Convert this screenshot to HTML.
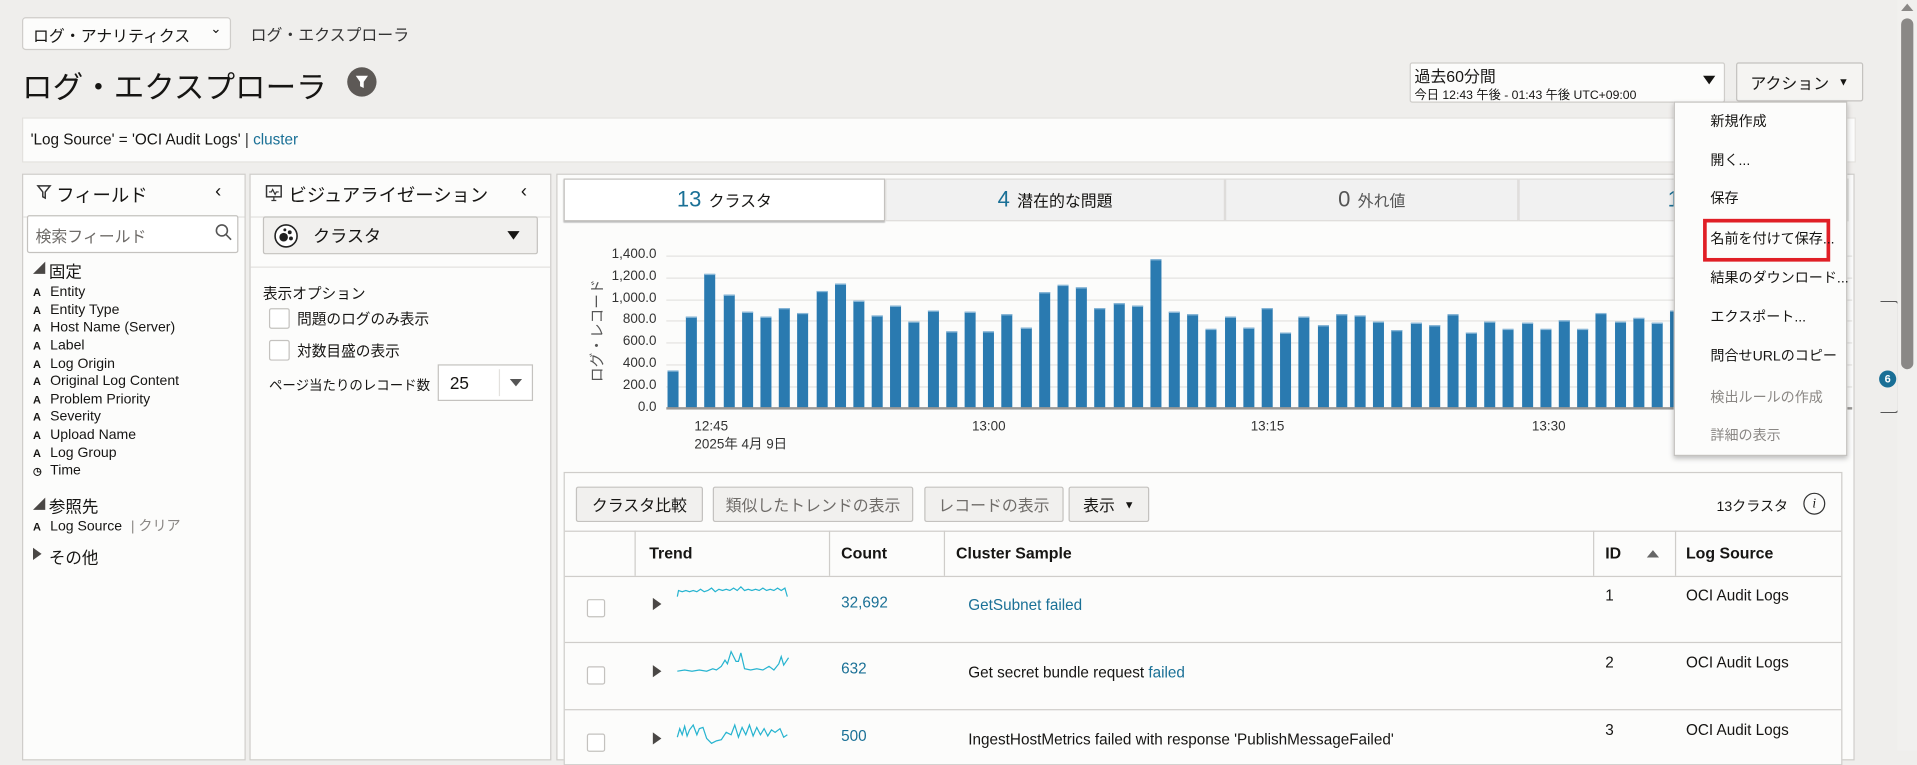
<!DOCTYPE html>
<html><head><meta charset="utf-8">
<style>
html,body{margin:0;padding:0;width:1917px;height:751px;overflow:hidden;background:#efeeec;}
#w{position:absolute;left:0;top:0;width:1568px;height:614px;transform:scale(1.22258);transform-origin:0 0;font-family:"Liberation Sans","Noto Sans CJK JP",sans-serif;color:#161513;font-size:12px;}
.a{position:absolute;}
.box{position:absolute;background:#fcfcfb;border:1px solid #cfcdca;box-sizing:border-box;}
.btn{position:absolute;background:#f1f0ee;border:1px solid #c4c2bf;border-radius:2px;box-sizing:border-box;font-size:13px;display:flex;align-items:center;justify-content:center;}
.f{position:absolute;left:27px;font-size:11.5px;}
.f b{display:inline-block;width:14px;font-size:9px;}
.bars{position:absolute;left:546px;top:180px;height:154px;display:flex;align-items:flex-end;}
.bars i{display:block;width:9px;margin-right:6.2px;background:#2a7ab0;border-top:1px solid #8ab8d8;box-sizing:border-box;}
.gl{position:absolute;left:545px;width:970px;height:1px;background:#e4e3e1;}
.yl{position:absolute;left:480px;width:57px;text-align:right;font-size:11px;color:#333;}
.xl{position:absolute;font-size:11px;color:#333;}
.tab{position:absolute;top:146px;height:35px;box-sizing:border-box;background:#f1f1f1;border:1px solid #dedcda;display:flex;align-items:center;justify-content:center;font-size:13px;}
.tab span{font-size:18px;color:#1a7096;margin-right:6px;}
.th{position:absolute;top:445px;font-weight:bold;font-size:13px;}
.vl{position:absolute;width:1px;background:#cfcdca;}
.hl{position:absolute;height:1px;background:#cfcdca;}
.cb{position:absolute;width:13px;height:13px;border:1px solid #c4c2bf;border-radius:2px;background:#fff;}
.tri{position:absolute;width:0;height:0;border-top:5px solid transparent;border-bottom:5px solid transparent;border-left:7px solid #4a4745;}
.mi{position:absolute;left:1399px;font-size:11.5px;}
</style></head><body><div id="w">

<div class="box" style="left:18px;top:14px;width:171px;height:27px;border-radius:3px;"></div>
<div class="a" style="left:27px;top:19px;font-size:13px;">ログ・アナリティクス</div>
<div class="a" style="left:172px;top:17px;font-size:11px;">&#8964;</div>
<div class="a" style="left:205px;top:18px;font-size:13px;color:#333;">ログ・エクスプローラ</div>
<div class="a" style="left:18px;top:52px;font-size:25px;">ログ・エクスプローラ</div>
<div class="a" style="left:284px;top:55px;width:24px;height:24px;border-radius:12px;background:#5d5956;"></div>
<svg class="a" style="left:284px;top:55px" width="24" height="24"><path d="M7 7h10l-3.5 5v5l-3-1.5v-3.5z" fill="#fff"/></svg>

<div class="box" style="left:1153px;top:51px;width:258px;height:33px;border-radius:2px;"></div>
<div class="a" style="left:1157px;top:52px;font-size:13px;">過去60分間</div>
<div class="a" style="left:1157px;top:69px;font-size:10px;">今日 12:43 午後 - 01:43 午後 UTC+09:00</div>
<div class="a" style="left:1393px;top:62px;border-left:5px solid transparent;border-right:5px solid transparent;border-top:7px solid #161513;"></div>
<div class="btn" style="left:1420px;top:51px;width:104px;height:32px;background:#f5f4f2;">アクション&nbsp;&nbsp;<span style="font-size:9px">▼</span></div>

<div class="box" style="left:18px;top:96px;width:1500px;height:37px;border-color:#e3e1de;"></div>
<div class="a" style="left:25px;top:107px;font-size:12.5px;">'Log Source' = 'OCI Audit Logs' <span style="color:#333">|</span> <span style="color:#1a7096">cluster</span></div>

<div class="box" style="left:18px;top:142px;width:183px;height:480px;"></div>
<div class="hl" style="left:19px;top:177px;width:181px;background:#e3e1de"></div>
<svg class="a" style="left:29px;top:150px" width="14" height="14"><path d="M2 2h10l-4 5v5l-2-1v-4z" fill="none" stroke="#333" stroke-width="1.2"/></svg>
<div class="a" style="left:46px;top:149px;font-size:15px;">フィールド</div>
<div class="a" style="left:176px;top:148px;font-size:15px;">&#8249;</div>
<div class="box" style="left:22px;top:176px;width:173px;height:31px;border-color:#c4c2bf;border-radius:2px;background:#fff;"></div>
<div class="a" style="left:29px;top:183px;font-size:13px;color:#6f6c69;">検索フィールド</div>
<svg class="a" style="left:175px;top:182px" width="16" height="16"><circle cx="6.5" cy="6.5" r="4.5" fill="none" stroke="#555" stroke-width="1.3"/><path d="M10 10l4 4" stroke="#555" stroke-width="1.3"/></svg>
<div class="a" style="left:27px;top:214px;border-left:10px solid transparent;border-bottom:10px solid #4a4745;width:0;height:0;"></div>
<div class="a" style="left:40px;top:211px;font-size:13.5px;">固定</div>
<div class="f" style="top:233px"><b>A</b>Entity</div>
<div class="f" style="top:248px"><b>A</b>Entity Type</div>
<div class="f" style="top:262px"><b>A</b>Host Name (Server)</div>
<div class="f" style="top:277px"><b>A</b>Label</div>
<div class="f" style="top:292px"><b>A</b>Log Origin</div>
<div class="f" style="top:306px"><b>A</b>Original Log Content</div>
<div class="f" style="top:321px"><b>A</b>Problem Priority</div>
<div class="f" style="top:335px"><b>A</b>Severity</div>
<div class="f" style="top:350px"><b>A</b>Upload Name</div>
<div class="f" style="top:365px"><b>A</b>Log Group</div>
<div class="f" style="top:379px"><b style="font-size:8px">◷</b>Time</div>
<div class="a" style="left:27px;top:407px;border-left:10px solid transparent;border-bottom:10px solid #4a4745;width:0;height:0;"></div>
<div class="a" style="left:40px;top:403px;font-size:13.5px;">参照先</div>
<div class="f" style="top:422px"><b>A</b>Log Source <span style="color:#8a8784;margin-left:4px">| クリア</span></div>
<div class="tri" style="left:27px;top:448px;"></div>
<div class="a" style="left:40px;top:445px;font-size:13.5px;">その他</div>

<div class="box" style="left:204px;top:142px;width:247px;height:480px;"></div>
<div class="hl" style="left:205px;top:177px;width:245px;background:#e3e1de"></div>
<svg class="a" style="left:217px;top:151px" width="14" height="14"><rect x="1" y="1" width="12" height="9" fill="none" stroke="#333" stroke-width="1.2"/><path d="M3 6l2 0 1-2 2 4 1-2h2M5 13h4M7 10v3" fill="none" stroke="#333" stroke-width="1"/></svg>
<div class="a" style="left:236px;top:149px;font-size:15px;">ビジュアライゼーション</div>
<div class="a" style="left:426px;top:148px;font-size:15px;">&#8249;</div>
<div class="btn" style="left:215px;top:177px;width:225px;height:31px;justify-content:flex-start;padding-left:8px;">
<svg width="20" height="20"><circle cx="10" cy="10" r="9" fill="#fff" stroke="#222" stroke-width="1.3"/><circle cx="8" cy="11" r="3.5" fill="#222"/><circle cx="13" cy="7" r="1.6" fill="#222"/><circle cx="14" cy="12" r="1.6" fill="#222"/><circle cx="9" cy="5" r="1.2" fill="#222"/></svg>
<span style="margin-left:12px;font-size:14px">クラスタ</span></div>
<div class="a" style="left:415px;top:189px;border-left:5px solid transparent;border-right:5px solid transparent;border-top:7px solid #161513;"></div>
<div class="hl" style="left:205px;top:218px;width:245px;background:#e3e1de"></div>
<div class="a" style="left:215px;top:231px;font-size:12px;">表示オプション</div>
<div class="cb" style="left:220px;top:252px;width:15px;height:15px"></div>
<div class="a" style="left:243px;top:252px;font-size:12px;">問題のログのみ表示</div>
<div class="cb" style="left:220px;top:278px;width:15px;height:15px"></div>
<div class="a" style="left:243px;top:278px;font-size:12px;">対数目盛の表示</div>
<div class="a" style="left:220px;top:307px;font-size:11px;">ページ当たりのレコード数</div>
<div class="box" style="left:358px;top:298px;width:78px;height:30px;border-color:#c4c2bf;background:#fff;"></div>
<div class="a" style="left:368px;top:305px;font-size:14px;">25</div>
<div class="vl" style="left:408px;top:302px;height:22px;background:#e3e1de"></div>
<div class="a" style="left:417px;top:310px;border-left:5px solid transparent;border-right:5px solid transparent;border-top:6px solid #555;"></div>

<div class="box" style="left:455px;top:142px;width:1062px;height:480px;"></div>
<div class="tab" style="left:461px;width:263px;background:#fff;border-color:#c4c2bf;box-shadow:0 1px 1px #aaa;"><span>13</span>クラスタ</div>
<div class="tab" style="left:724px;width:278px;"><span>4</span>潜在的な問題</div>
<div class="tab" style="left:1002px;width:240px;color:#555;"><span style="color:#555">0</span>外れ値</div>
<div class="tab" style="left:1242px;width:270px;"><span>13</span></div>

<div class="gl" style="top:209px"></div><div class="gl" style="top:227px"></div><div class="gl" style="top:245px"></div><div class="gl" style="top:262px"></div><div class="gl" style="top:280px"></div><div class="gl" style="top:298px"></div><div class="gl" style="top:316px"></div>
<div class="yl" style="top:202px">1,400.0</div><div class="yl" style="top:220px">1,200.0</div><div class="yl" style="top:238px">1,000.0</div><div class="yl" style="top:255px">800.0</div><div class="yl" style="top:273px">600.0</div><div class="yl" style="top:291px">400.0</div><div class="yl" style="top:309px">200.0</div><div class="yl" style="top:327px">0.0</div>
<div class="a" style="left:443px;top:262px;width:90px;text-align:center;font-size:12px;color:#555;transform:rotate(-90deg);">ログ・レコード</div>
<div class="bars">
<i style="height:31px"></i><i style="height:75px"></i><i style="height:110px"></i><i style="height:93px"></i><i style="height:79px"></i><i style="height:75px"></i><i style="height:82px"></i><i style="height:78px"></i><i style="height:96px"></i><i style="height:102px"></i><i style="height:88px"></i><i style="height:76px"></i><i style="height:84px"></i><i style="height:71px"></i><i style="height:80px"></i><i style="height:63px"></i><i style="height:79px"></i><i style="height:63px"></i><i style="height:77px"></i><i style="height:66px"></i><i style="height:95px"></i><i style="height:101px"></i><i style="height:99px"></i><i style="height:82px"></i><i style="height:86px"></i><i style="height:84px"></i><i style="height:122px"></i><i style="height:79px"></i><i style="height:77px"></i><i style="height:65px"></i><i style="height:75px"></i><i style="height:66px"></i><i style="height:82px"></i><i style="height:62px"></i><i style="height:75px"></i><i style="height:68px"></i><i style="height:77px"></i><i style="height:76px"></i><i style="height:71px"></i><i style="height:64px"></i><i style="height:70px"></i><i style="height:68px"></i><i style="height:77px"></i><i style="height:62px"></i><i style="height:71px"></i><i style="height:65px"></i><i style="height:70px"></i><i style="height:65px"></i><i style="height:72px"></i><i style="height:65px"></i><i style="height:78px"></i><i style="height:71px"></i><i style="height:74px"></i><i style="height:70px"></i><i style="height:80px"></i><i style="height:76px"></i><i style="height:73px"></i><i style="height:79px"></i><i style="height:71px"></i><i style="height:77px"></i><i style="height:72px"></i><i style="height:75px"></i><i style="height:71px"></i>
</div>
<div class="a" style="left:545px;top:333px;width:970px;height:2px;background:#9a9896;"></div>
<div class="xl" style="left:568px;top:343px;">12:45<br>2025年 4月 9日</div>
<div class="xl" style="left:795px;top:343px;">13:00</div>
<div class="xl" style="left:1023px;top:343px;">13:15</div>
<div class="xl" style="left:1253px;top:343px;">13:30</div>

<div class="box" style="left:461px;top:386px;width:1046px;height:240px;border-color:#cfcdca;"></div>
<div class="btn" style="left:471px;top:398px;width:104px;height:29px;">クラスタ比較</div>
<div class="btn" style="left:583px;top:398px;width:164px;height:29px;color:#6f6c69;">類似したトレンドの表示</div>
<div class="btn" style="left:756px;top:398px;width:114px;height:29px;color:#6f6c69;">レコードの表示</div>
<div class="btn" style="left:874px;top:398px;width:66px;height:29px;">表示&nbsp;&nbsp;<span style="font-size:9px">▼</span></div>
<div class="a" style="left:1404px;top:406px;font-size:11.5px;">13クラスタ</div>
<div class="a" style="left:1475px;top:403px;width:16px;height:16px;border:1px solid #333;border-radius:9px;font-size:11px;font-style:italic;text-align:center;line-height:16px;font-family:'Liberation Serif',serif;">i</div>
<div class="hl" style="left:462px;top:434px;width:1044px;"></div>
<div class="hl" style="left:462px;top:471px;width:1044px;"></div>
<div class="hl" style="left:462px;top:525px;width:1044px;"></div>
<div class="hl" style="left:462px;top:580px;width:1044px;"></div>
<div class="vl" style="left:519px;top:434px;height:37px"></div>
<div class="vl" style="left:678px;top:434px;height:37px"></div>
<div class="vl" style="left:772px;top:434px;height:37px"></div>
<div class="vl" style="left:1303px;top:434px;height:37px"></div>
<div class="vl" style="left:1370px;top:434px;height:37px"></div>
<div class="th" style="left:531px;">Trend</div>
<div class="th" style="left:688px;">Count</div>
<div class="th" style="left:782px;">Cluster Sample</div>
<div class="th" style="left:1313px;">ID</div>
<div class="a" style="left:1347px;top:450px;border-left:5px solid transparent;border-right:5px solid transparent;border-bottom:6px solid #666;"></div>
<div class="th" style="left:1379px;">Log Source</div>

<div class="cb" style="left:480px;top:490px"></div><div class="tri" style="left:534px;top:489px"></div>
<div class="cb" style="left:480px;top:545px"></div><div class="tri" style="left:534px;top:544px"></div>
<div class="cb" style="left:480px;top:600px"></div><div class="tri" style="left:534px;top:599px"></div>
<svg class="a" style="left:550px;top:475px" width="100" height="145"><g fill="none" stroke="#27b4d0" stroke-width="1">
<polyline points="4,13 5,8 8,9 11,8 14,9 17,8 20,9 23,7 26,9 29,8 32,6 35,9 38,7 41,8 44,7 47,8 50,6 53,8 56,5 59,8 62,7 65,8 68,7 71,8 74,6 77,8 80,7 83,8 86,6 89,8 92,6 94,13"/>
<polyline points="4,74 10,73 16,74 22,73 28,74 33,72 36,73 40,70 43,65 45,68 48,58 52,66 54,66 56,59 59,72 64,73 69,72 74,73 79,70 83,73 87,68 89,62 91,69 93,66 95,63"/>
<polyline points="4,128 6,121 8,126 10,119 12,127 14,122 17,118 20,126 22,121 25,120 28,129 32,133 36,131 40,130 44,124 48,126 51,118 54,128 57,120 60,126 63,118 66,127 69,120 72,126 75,121 78,127 81,122 84,124 88,121 91,128 94,126"/></g></svg>
<div class="a" style="left:688px;top:486px;font-size:12.5px;color:#1a7096;">32,692</div>
<div class="a" style="left:688px;top:540px;font-size:12.5px;color:#1a7096;">632</div>
<div class="a" style="left:688px;top:595px;font-size:12.5px;color:#1a7096;">500</div>
<div class="a" style="left:792px;top:488px;font-size:12.5px;color:#1a7096;">GetSubnet failed</div>
<div class="a" style="left:792px;top:543px;font-size:12.5px;">Get secret bundle request <span style="color:#1a7096">failed</span></div>
<div class="a" style="left:792px;top:598px;font-size:12.5px;">IngestHostMetrics failed with response 'PublishMessageFailed'</div>
<div class="a" style="left:1313px;top:480px;font-size:12.5px;">1</div>
<div class="a" style="left:1313px;top:535px;font-size:12.5px;">2</div>
<div class="a" style="left:1313px;top:590px;font-size:12.5px;">3</div>
<div class="a" style="left:1379px;top:480px;font-size:12.5px;">OCI Audit Logs</div>
<div class="a" style="left:1379px;top:535px;font-size:12.5px;">OCI Audit Logs</div>
<div class="a" style="left:1379px;top:590px;font-size:12.5px;">OCI Audit Logs</div>

<div class="a" style="left:1538px;top:246px;width:14px;height:90px;border:1px solid #555;border-left:none;border-radius:0 3px 3px 0;"></div>
<div class="a" style="left:1537px;top:303px;width:14px;height:14px;border-radius:7px;background:#1a6f96;color:#fff;font-size:9px;font-weight:bold;text-align:center;line-height:14px;">6</div>
<div class="a" style="left:1552px;top:0;width:16px;height:614px;background:#f1f0ee;"></div>
<div class="a" style="left:1555px;top:3px;border-left:5px solid transparent;border-right:5px solid transparent;border-bottom:6px solid #8a8886;"></div>
<div class="a" style="left:1555px;top:15px;width:10px;height:287px;border-radius:5px;background:#8a8886;"></div>

<div class="a" style="left:1369px;top:83px;width:142px;height:290px;background:#fcfcfb;border:1px solid #c4c2bf;box-sizing:border-box;box-shadow:0 2px 4px rgba(0,0,0,.25);"></div>
<div class="mi" style="top:91px">新規作成</div>
<div class="mi" style="top:123px">開く...</div>
<div class="mi" style="top:154px">保存</div>
<div class="a" style="left:1393px;top:179px;width:104px;height:35px;border:3px solid #e01f26;box-sizing:border-box;"></div>
<div class="mi" style="top:187px">名前を付けて保存...</div>
<div class="mi" style="top:219px">結果のダウンロード...</div>
<div class="mi" style="top:251px">エクスポート...</div>
<div class="mi" style="top:283px">問合せURLのコピー</div>
<div class="mi" style="top:317px;color:#8a8784">検出ルールの作成</div>
<div class="mi" style="top:348px;color:#8a8784">詳細の表示</div>

</div></body></html>
